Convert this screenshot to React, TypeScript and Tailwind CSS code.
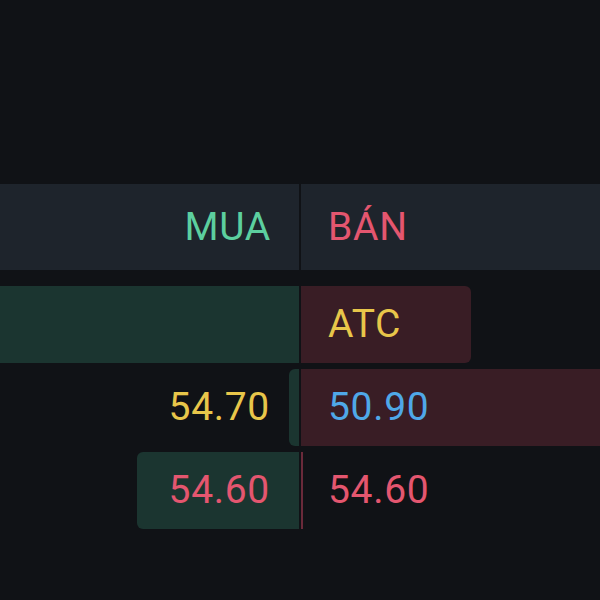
import React from 'react';

type Side = { text?: string; color?: string; bar: number; rounded?: boolean };

const rows: { buy: Side; sell: Side }[] = [
  { buy: { bar: 320 }, sell: { text: 'ATC', color: 'text-[#e8c64a]', bar: 170, rounded: true } },
  { buy: { text: '54.70', color: 'text-[#e8c64a]', bar: 10, rounded: true }, sell: { text: '50.90', color: 'text-[#4fa8e8]', bar: 320 } },
  { buy: { text: '54.60', color: 'text-[#e4566f]', bar: 162, rounded: true }, sell: { text: '54.60', color: 'text-[#e4566f]', bar: 2 } },
];

const App: React.FC = () => {
  return (
    <div
      className="w-[600px] h-[600px] bg-[#101216] overflow-hidden pt-[184px] tracking-[0.7px]"
      style={{ fontFamily: 'Roboto, "Liberation Sans", sans-serif' }}
    >
      {/* header */}
      <div className="grid grid-cols-2 gap-[2px] h-[86px]">
        <div className="bg-[#1e242c] flex items-center justify-end pr-[28px] text-[39px] text-[#5ccf9f]">MUA</div>
        <div className="bg-[#1e242c] flex items-center pl-[27px] text-[39px] text-[#e4566f]">BÁN</div>
      </div>

      {/* order rows */}
      <div className="mt-[16px] flex flex-col gap-[6px]">
        {rows.map((r, i) => (
          <div key={i} className="grid grid-cols-2 gap-[2px] h-[77px] text-[39px]">
            <div className="relative flex items-center justify-end pr-[29px]">
              <div
                className={`absolute right-0 top-0 bottom-0 bg-[#1b3530] ${r.buy.rounded ? 'rounded-l-[6px]' : ''}`}
                style={{ width: r.buy.bar }}
              />
              {r.buy.text && <span className={`relative ${r.buy.color}`}>{r.buy.text}</span>}
            </div>
            <div className="relative flex items-center pl-[27px]">
              <div
                className={`absolute left-0 top-0 bottom-0 ${r.sell.bar < 5 ? 'bg-[#6a2a3a]' : 'bg-[#391d25]'} ${r.sell.rounded ? 'rounded-r-[6px]' : ''}`}
                style={{ width: r.sell.bar }}
              />
              {r.sell.text && <span className={`relative ${r.sell.color}`}>{r.sell.text}</span>}
            </div>
          </div>
        ))}
      </div>
    </div>
  );
};

export default App;
